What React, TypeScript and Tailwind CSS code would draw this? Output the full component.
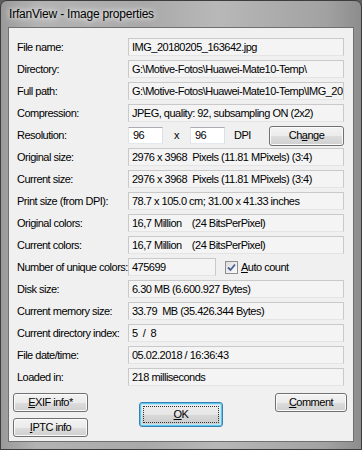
import type { ReactNode } from "react";

const ROWS_TOP: Array<[string, string]> = [
  ["File name:", "IMG_20180205_163642.jpg"],
  ["Directory:", "G:\\Motive-Fotos\\Huawei-Mate10-Temp\\"],
  ["Full path:", "G:\\Motive-Fotos\\Huawei-Mate10-Temp\\IMG_20180205_163642.jpg"],
  ["Compression:", "JPEG, quality: 92, subsampling ON (2x2)"],
];

const ROWS_MID: Array<[string, string]> = [
  ["Original size:", "2976 x 3968  Pixels (11.81 MPixels) (3:4)"],
  ["Current size:", "2976 x 3968  Pixels (11.81 MPixels) (3:4)"],
  ["Print size (from DPI):", "78.7 x 105.0 cm; 31.00 x 41.33 inches"],
  ["Original colors:", "16,7 Million    (24 BitsPerPixel)"],
  ["Current colors:", "16,7 Million    (24 BitsPerPixel)"],
];

const ROWS_END: Array<[string, string]> = [
  ["Disk size:", "6.30 MB (6.600.927 Bytes)"],
  ["Current memory size:", "33.79  MB (35.426.344 Bytes)"],
  ["Current directory index:", "5  /  8"],
  ["File date/time:", "05.02.2018 / 16:36:43"],
  ["Loaded in:", "218 milliseconds"],
];

function Label({ children }: { children: ReactNode }) {
  return <div className="w-[111px] shrink-0 whitespace-nowrap">{children}</div>;
}

function ValueBox({ children, className = "flex-1" }: { children: ReactNode; className?: string }) {
  return (
    <div
      className={`${className} min-w-0 h-[18px] flex items-center overflow-hidden whitespace-pre pl-[3px] border border-[#c9c9c9] border-b-[#e4e4e4] bg-[#f4f4f4]`}
    >
      {children}
    </div>
  );
}

function Row({ label, value }: { label: string; value: string }) {
  return (
    <div className="flex items-center h-[18px]">
      <Label>{label}</Label>
      <ValueBox>{value}</ValueBox>
    </div>
  );
}

function Btn({ children, className = "" }: { children: ReactNode; className?: string }) {
  return (
    <div
      className={`flex items-center justify-center rounded-[3px] border border-[#707070] shadow-[inset_0_0_0_1px_#fbfbfb] bg-[linear-gradient(#f3f3f3_0%,#ebebeb_50%,#dddddd_51%,#cfcfcf_100%)] ${className}`}
    >
      {children}
    </div>
  );
}

function EditBox({ children, className = "" }: { children: ReactNode; className?: string }) {
  return (
    <div
      className={`h-[17px] flex items-center pl-[4px] bg-white border border-[#abadb3] border-b-[#e3e9ef] border-l-[#e2e3ea] border-r-[#dbdfe6] ${className}`}
    >
      {children}
    </div>
  );
}

export default function App() {
  return (
    <div className="w-[362px] h-[450px] bg-[#5e5e5e] font-['Liberation_Sans',Arial,sans-serif] text-[11px] tracking-[-0.5px] text-black">
      <div className="w-full h-full flex flex-col rounded-t-[7px] border border-[#3d3d3d] bg-[linear-gradient(90deg,#9a9a9a_0%,#b3b3b3_10%,#a9a9a9_40%,#b8b8b8_60%,#a2a2a2_90%,#8d8d8d_100%)] px-[7px] pb-[7px]">
        {/* title bar */}
        <div className="h-[26px] flex items-center pl-[1px] shrink-0">
          <span className="text-[12px] tracking-[-0.2px] text-black [text-shadow:0_0_8px_#ffffff,0_0_4px_#e8e8e8]">
            IrfanView - Image properties
          </span>
        </div>

        {/* client area */}
        <div className="flex-1 flex flex-col bg-[#f0f0f0] border border-[#707070] pt-[10px] pl-[8px] pr-[9px]">
          <div className="flex flex-col gap-[4px]">
            {ROWS_TOP.map(([l, v]) => (
              <Row key={l} label={l} value={v} />
            ))}

            <div className="flex items-center h-[18px]">
              <Label>Resolution:</Label>
              <EditBox className="w-[35px]">96</EditBox>
              <div className="w-[27px] text-center">x</div>
              <EditBox className="w-[35px]">96</EditBox>
              <div className="w-[44px] pl-[9px]">DPI</div>
              <Btn className="flex-1 h-[20px] mt-[1px]">
                <span>
                  Ch<span className="underline">a</span>nge
                </span>
              </Btn>
            </div>

            {ROWS_MID.map(([l, v]) => (
              <Row key={l} label={l} value={v} />
            ))}

            <div className="flex items-center h-[18px]">
              <Label>Number of unique colors:</Label>
              <ValueBox className="w-[88px]">475699</ValueBox>
              <div className="ml-[9px] w-[13px] h-[13px] border border-[#8e8f8f] bg-[linear-gradient(135deg,#dcdcdc,#fdfdfd)] flex items-center justify-center">
                <svg width="9" height="9" viewBox="0 0 9 9">
                  <path d="M1 4.5 L3.5 7 L8 1.5" fill="none" stroke="#4a5f97" strokeWidth="1.8" />
                </svg>
              </div>
              <div className="ml-[3px]">
                <span className="underline">A</span>uto count
              </div>
            </div>

            {ROWS_END.map(([l, v]) => (
              <Row key={l} label={l} value={v} />
            ))}
          </div>

          {/* buttons */}
          <div className="flex items-start mt-[7px] ml-[-4px] mr-[-3px]">
            <div className="flex flex-col gap-[6px] w-[75px]">
              <Btn className="h-[19px]">
                <span>
                  <span className="underline">E</span>XIF info*
                </span>
              </Btn>
              <Btn className="h-[19px]">
                <span>
                  <span className="underline">I</span>PTC info
                </span>
              </Btn>
            </div>
            <div className="ml-[51px] mt-[9px] w-[84px] h-[25px] rounded-[3px] border border-[#3c7fb1] shadow-[inset_0_0_0_1px_#58c8ec,inset_0_0_0_2px_#bfe6f5] bg-[linear-gradient(#eeeeee_0%,#e6e6e6_50%,#d8d8d8_51%,#cccccc_100%)] p-[3px] flex">
              <div className="flex-1 flex items-center justify-center border border-dotted border-[#333]">
                <span>
                  <span className="underline">O</span>K
                </span>
              </div>
            </div>
            <Btn className="ml-[52px] w-[72px] h-[19px]">
              <span>
                <span className="underline">C</span>omment
              </span>
            </Btn>
          </div>
        </div>
      </div>
    </div>
  );
}
